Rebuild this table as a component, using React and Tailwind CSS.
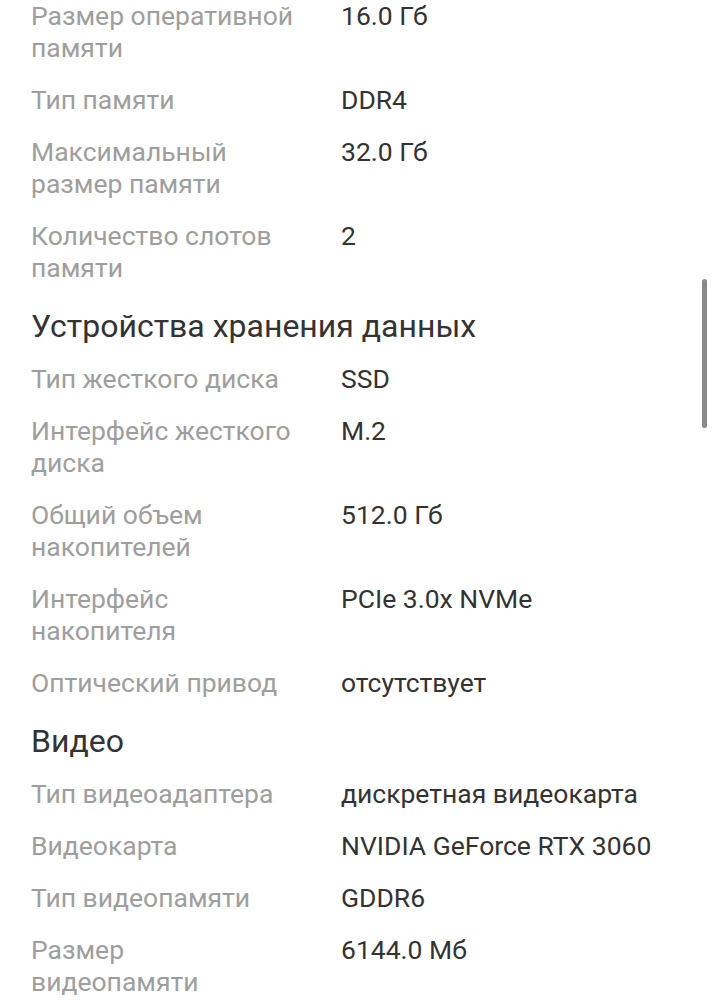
const sections = [
  {
    title: null,
    rows: [
      [["Размер оперативной", "памяти"], "16.0 Гб"],
      [["Тип памяти"], "DDR4"],
      [["Максимальный", "размер памяти"], "32.0 Гб"],
      [["Количество слотов", "памяти"], "2"],
    ],
  },
  {
    title: "Устройства хранения данных",
    rows: [
      [["Тип жесткого диска"], "SSD"],
      [["Интерфейс жесткого", "диска"], "M.2"],
      [["Общий объем", "накопителей"], "512.0 Гб"],
      [["Интерфейс", "накопителя"], "PCIe 3.0x NVMe"],
      [["Оптический привод"], "отсутствует"],
    ],
  },
  {
    title: "Видео",
    rows: [
      [["Тип видеоадаптера"], "дискретная видеокарта"],
      [["Видеокарта"], "NVIDIA GeForce RTX 3060"],
      [["Тип видеопамяти"], "GDDR6"],
      [["Размер", "видеопамяти"], "6144.0 Мб"],
    ],
  },
];

function Row({ label, value }) {
  return (
    <div className="grid grid-cols-[310px_1fr] py-[10px] text-[26.5px] leading-[32px]">
      <div className="text-[#9e9e9e]">
        {label.map((l, i) => (
          <div key={i}>{l}</div>
        ))}
      </div>
      <div className="text-[#333333]">{value}</div>
    </div>
  );
}

export default function App() {
  return (
    <div
      className="relative h-[1000px] overflow-hidden bg-white"
      style={{ fontFamily: "Roboto, 'Noto Sans', sans-serif" }}
    >
      <div className="-mt-[10px] px-[31px]">
        {sections.map((s, i) => (
          <div key={i}>
            {s.title && (
              <h2 className="pt-[14px] pb-[9px] text-[32px] leading-[36px] text-[#333333]">{s.title}</h2>
            )}
            {s.rows.map(([label, value], j) => (
              <Row key={j} label={label} value={value} />
            ))}
          </div>
        ))}
      </div>
      <div className="absolute left-[702px] top-[279px] h-[149px] w-[5px] rounded-full bg-[#8a8a8a]" />
    </div>
  );
}
